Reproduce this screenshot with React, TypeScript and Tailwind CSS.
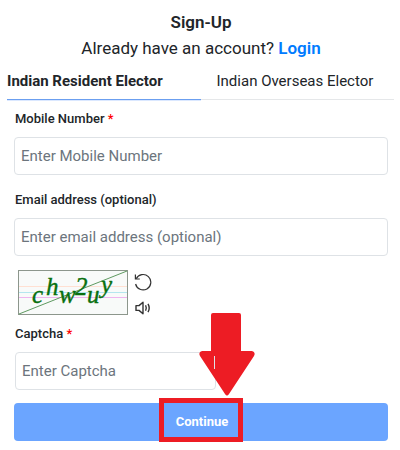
import type { ReactNode } from "react";

function Label({ htmlFor, required, children }: { htmlFor: string; required?: boolean; children: ReactNode }) {
    return (
        <label htmlFor={htmlFor} className="block pl-px text-[13px] leading-4 font-medium text-[#212529]">
            {children}
            {required && <span className="text-[#ff0000]"> *</span>}
        </label>
    );
}

const inputStyle =
    "block h-[38px] w-full rounded border border-[#dee2e6] bg-white px-1.5 text-[15px] text-[#212529] placeholder:text-[#6c757d]";

function CaptchaImage() {
    return (
        <svg width="110" height="45" viewBox="0 0 110 45" role="img" aria-label="Captcha">
            <rect x="0.5" y="0.5" width="109" height="44" fill="#f8faf9" stroke="#8c968c" />
            <path d="M1 16.5H109" stroke="#ffe0d2" />
            <path d="M1 22.5H109" stroke="#b4e6ee" />
            <path d="M1 27.5H109" stroke="#efb5ef" />
            <path d="M1 44L109 1" stroke="#5f9a61" />
            <text
                x="14 28 41 57 69 83"
                y="33 25 33 25 33 23"
                fill="#08700f"
                stroke="#08700f"
                strokeWidth="0.4"
                fontFamily="'Liberation Serif', serif"
                fontStyle="italic"
                fontSize="25"
            >
                chw2uy
            </text>
        </svg>
    );
}

function RefreshIcon() {
    return (
        <svg width="18" height="18" viewBox="0 0 18 18" fill="none" stroke="#333" strokeWidth="1.2">
            <path d="M2.2 5.8A7.7 7.7 0 1 1 1.6 11" />
            <path d="M1.4 1.6V6H5.8" />
        </svg>
    );
}

function SpeakerIcon() {
    return (
        <svg width="16" height="14" viewBox="0 0 16 14" fill="none" stroke="#333" strokeWidth="1.4" strokeLinejoin="round">
            <path d="M1 4.6H4L8 1.2V12.8L4 9.4H1Z" />
            <path d="M10.6 4.2Q12 7 10.6 9.8" />
            <path d="M13 2.8Q15.4 7 13 11.2" />
        </svg>
    );
}

function Arrow() {
    return (
        <svg
            className="absolute bottom-full left-[35px] mb-[7px]"
            width="56"
            height="83"
            viewBox="0 0 56 83"
        >
            <path
                d="M14 0H40Q42 0 42 2V38H53Q57 39 55 43L30 81Q28 84 26 81L1 43Q-1 39 3 38H12V2Q12 0 14 0Z"
                fill="#ed1c24"
            />
            <path d="M15.5 43V56" stroke="#dee2e6" />
        </svg>
    );
}

function App() {
    return (
        <main className="bg-white pt-2.5 pb-2.5 font-['Roboto',sans-serif] text-[#212529]">
            <div className="pl-0.5 text-center text-[17px] leading-6">
                <h1 className="font-semibold">Sign-Up</h1>
                <p className="mt-0.5">
                    Already have an account?{" "}
                    <a href="#login" className="font-semibold text-[#007bff]">
                        Login
                    </a>
                </p>
            </div>

            <div className="mt-2 mr-1.5 ml-[7px] flex text-[15px]">
                <button type="button" className="h-8 w-1/2 border-b border-[#6b9ff0] pb-1 text-left font-bold shadow-[0_1px_#dbe8ff]">
                    Indian Resident Elector
                </button>
                <button type="button" className="h-8 w-1/2 border-b border-[#e5e7e9] pb-1 pl-4 text-left">
                    Indian Overseas Elector
                </button>
            </div>

            <form className="mt-[11px] mr-3 ml-3.5">
                <Label htmlFor="mobile" required>Mobile Number</Label>
                <input id="mobile" type="tel" placeholder="Enter Mobile Number" className={`${inputStyle} mt-2.5`} />

                <div className="mt-[17px]">
                    <Label htmlFor="email">Email address (optional)</Label>
                    <input id="email" type="email" placeholder="Enter email address (optional)" className={`${inputStyle} mt-2.5`} />
                </div>

                <div className="mt-3.5 ml-1 flex gap-1.5">
                    <CaptchaImage />
                    <div className="flex flex-col items-center justify-between pt-[3px]">
                        <button type="button" aria-label="Refresh captcha" className="block"><RefreshIcon /></button>
                        <button type="button" aria-label="Play captcha" className="block"><SpeakerIcon /></button>
                    </div>
                </div>

                <div className="mt-[11px]">
                    <Label htmlFor="captcha" required>Captcha</Label>
                    <div className="mt-2.5 w-[54%] pl-px">
                        <input id="captcha" type="text" placeholder="Enter Captcha" className={inputStyle} />
                    </div>
                </div>

                <button
                    type="submit"
                    className="relative mt-[13px] flex h-[38px] w-full items-center justify-center rounded bg-[#6ba5ff] pl-0.5 text-[13px] font-bold text-white"
                >
                    Continue
                    {/* highlight around the button text */}
                    <span className="pointer-events-none absolute -top-[5px] left-1/2 h-11 w-[84px] -translate-x-1/2 border-5 border-[#ed1c24]">
                        <Arrow />
                    </span>
                </button>
            </form>
        </main>
    );
}

export default App;
